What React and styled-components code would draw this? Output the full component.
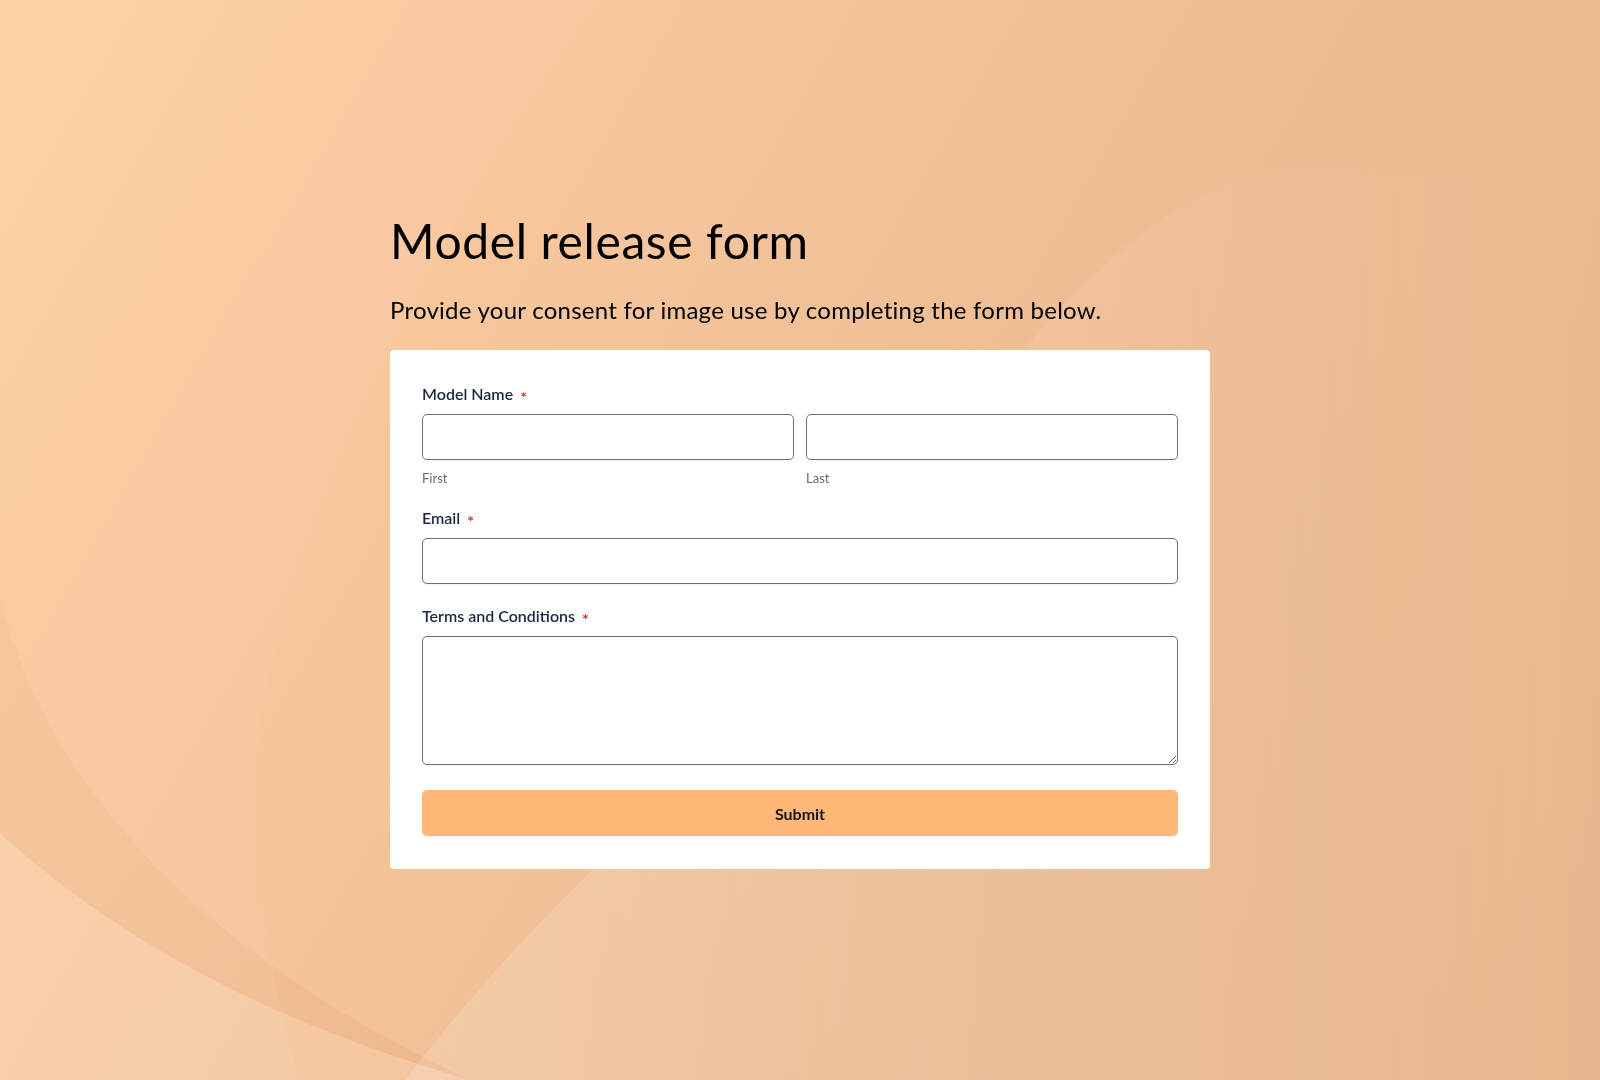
import React from 'react'
import styled, { createGlobalStyle } from 'styled-components'

const GlobalStyle = createGlobalStyle`
  * { box-sizing: border-box; }
  html, body { margin: 0; padding: 0; }
  body {
    font-family: Lato, "Open Sans", Arial, sans-serif;
    background: linear-gradient(120deg, #ffcfa2 0%, #f6c49a 35%, #ecba90 65%, #e8b78e 100%);
    min-height: 1080px;
  }
`

const Backdrop = styled.svg`
  position: fixed;
  inset: 0;
  width: 100%;
  height: 100%;
  z-index: 0;
  pointer-events: none;
`

const Page = styled.main`
  position: relative;
  z-index: 1;
  width: 820px;
  margin: 0 auto;
  padding-top: 212px;
  padding-bottom: 60px;
`

const Title = styled.h1`
  margin: 0 0 26px;
  font-family: Lato, "Open Sans", sans-serif;
  font-weight: 400;
  font-size: 48px;
  line-height: 1.2;
  letter-spacing: 0.6px;
  color: #000;
`

const Lead = styled.p`
  margin: 0 0 26px;
  font-family: Lato, "Open Sans", sans-serif;
  font-size: 24px;
  line-height: 1.2;
  letter-spacing: 0.25px;
  color: #000;
`

const Card = styled.form`
  background: #fff;
  border-radius: 4px;
  padding: 34px 32px 33px;
  display: flex;
  flex-direction: column;
  gap: 22px;
`

const Field = styled.div`
  display: flex;
  flex-direction: column;
`

const Label = styled.label`
  display: flex;
  align-items: center;
  gap: 7px;
  margin-bottom: 10px;
  font-size: 16px;
  line-height: 20px;
  font-weight: 600;
  color: #1b2840;
`

const Required = styled.span`
  color: #d3321f;
  font-size: 16px;
  font-weight: 700;
  line-height: 1;
  transform: translateY(3px);
`

const Split = styled.div`
  display: grid;
  grid-template-columns: 1fr 1fr;
  gap: 12px;
`

const Part = styled.div`
  display: flex;
  flex-direction: column;
`

const Input = styled.input`
  height: 46px;
  width: 100%;
  border: 1px solid #6b7080;
  border-radius: 5px;
  background: #fff;
  box-shadow: 0 1px 2px rgba(16, 24, 40, 0.06);
  font: inherit;
  padding: 0 12px;
  outline: none;
`

const TextArea = styled.textarea`
  height: 129px;
  width: 100%;
  border: 1px solid #6b7080;
  border-radius: 5px;
  background: #fff;
  box-shadow: 0 1px 2px rgba(16, 24, 40, 0.06);
  font: inherit;
  padding: 10px 12px;
  outline: none;
  display: block;
`

const Hint = styled.span`
  margin-top: 10px;
  font-size: 13px;
  line-height: 16px;
  color: #636a76;
`

const Submit = styled.button`
  margin-top: 3px;
  height: 46px;
  width: 100%;
  border: none;
  border-radius: 5px;
  background: #feb777;
  color: #141414;
  font-family: Lato, sans-serif;
  font-size: 16px;
  font-weight: 700;
  box-shadow: 0 1px 2px rgba(16, 24, 40, 0.05);
  cursor: pointer;
`

const Background = () => (
  <Backdrop viewBox="0 0 1600 1080" preserveAspectRatio="none" aria-hidden="true">
    <defs>
      <linearGradient id="glow" x1="0" y1="0" x2="1" y2="0">
        <stop offset="0" stopColor="#fff" stopOpacity="0.16" />
        <stop offset="0.5" stopColor="#fff" stopOpacity="0.08" />
        <stop offset="1" stopColor="#fff" stopOpacity="0.01" />
      </linearGradient>
      <linearGradient id="shade" x1="0" y1="0" x2="1" y2="1">
        <stop offset="0" stopColor="#c98d5c" stopOpacity="0.08" />
        <stop offset="1" stopColor="#c98d5c" stopOpacity="0.12" />
      </linearGradient>
    </defs>
    {/* top-left soft light */}
    <path d="M0 0 L602 0 C470 180 330 420 262 700 C245 820 260 950 300 1080 L0 1080 Z" fill="#fff" fillOpacity="0.05" />
    {/* bottom-right big arc */}
    <path d="M405 1080 C520 930 640 820 760 720 C960 420 1120 170 1310 168 C1420 168 1520 185 1600 215 L1600 1080 Z" fill="url(#glow)" />
    {/* darker wedge bottom-left */}
    <path d="M0 596 C40 760 170 940 470 1080 C300 1030 140 960 0 833 Z" fill="url(#shade)" />
    {/* bottom-left light corner */}
    <path d="M0 833 C140 960 300 1030 470 1080 L0 1080 Z" fill="#fff" fillOpacity="0.1" />
  </Backdrop>
)

export default function App() {
  return (
    <>
      <GlobalStyle />
      <Background />
      <Page>
        <Title>Model release form</Title>
        <Lead>Provide your consent for image use by completing the form below.</Lead>
        <Card onSubmit={e => e.preventDefault()}>
          <Field>
            <Label>Model Name <Required>*</Required></Label>
            <Split>
              <Part>
                <Input type="text" aria-label="First" />
                <Hint>First</Hint>
              </Part>
              <Part>
                <Input type="text" aria-label="Last" />
                <Hint>Last</Hint>
              </Part>
            </Split>
          </Field>
          <Field>
            <Label>Email <Required>*</Required></Label>
            <Input type="email" />
          </Field>
          <Field>
            <Label>Terms and Conditions <Required>*</Required></Label>
            <TextArea />
          </Field>
          <Submit type="submit">Submit</Submit>
        </Card>
      </Page>
    </>
  )
}
